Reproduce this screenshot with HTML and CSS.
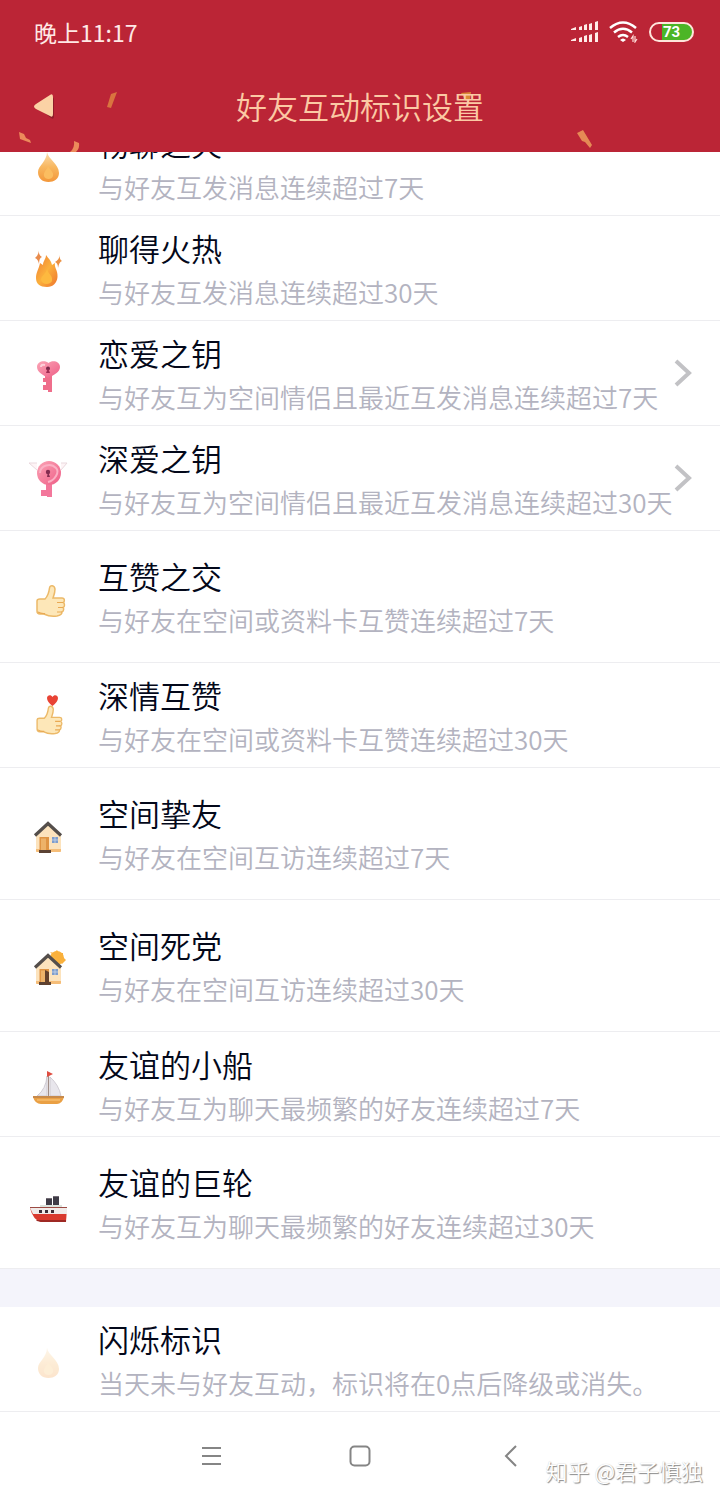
FILE: index.html
```html
<!DOCTYPE html>
<html lang="zh-CN">
<head>
    <meta charset="UTF-8">
    <meta name="viewport" content="width=device-width, initial-scale=1.0">
    <title>好友互动标识设置</title>
    <link rel="stylesheet" href="styles.css">
</head>
<body>

    <!-- shared icon shapes -->
    <svg class="defs" width="0" height="0" aria-hidden="true">
        <defs>
            <linearGradient id="fire" x1="0" y1="0" x2="0" y2="1">
                <stop offset="0" stop-color="#fbdcae"/>
                <stop offset=".5" stop-color="#f8b75f"/>
                <stop offset="1" stop-color="#f3973a"/>
            </linearGradient>
            <linearGradient id="hot" x1="0" y1="0" x2="1" y2="1">
                <stop offset="0" stop-color="#ee7a35"/>
                <stop offset=".5" stop-color="#fbb03c"/>
                <stop offset="1" stop-color="#ee742d"/>
            </linearGradient>
            <linearGradient id="pink" x1="0" y1="0" x2="1" y2="1">
                <stop offset="0" stop-color="#fba5b6"/>
                <stop offset="1" stop-color="#ee5d86"/>
            </linearGradient>
            <symbol id="drop" viewBox="0 0 40 40">
                <path d="M19 4C20 11 31 16 31 25C31 31 26 34 20.500 34C14 34 10 30 10 24C10 18 19 13 19 4Z" fill="url(#fire)"/>
                <path d="M20 18C22 22 26 24 25 28C24 32 17 32 16 28C15 24 19 22 20 18Z" fill="#fbbd60"/>
            </symbol>
            <symbol id="thumb" viewBox="0 0 40 40">
                <path d="M9 20Q9 18 12 18H17C20 15 21 11 21.500 7C22 3.500 26.500 4 27 8C27 12 26 14 25 17H34C37 17 37 21 35 21.500C37 22 37 26 35 26.500C36 27 36 30 34 31C34 34 32 34.500 29 35C21 36 18 34 16 33H12Q9 33 9 30Z" fill="#fde7b8" stroke="#ecb968" stroke-width="1.500"/>
                <path d="M29 21.500H35M30 26.500H35M29 31H34M10 31Q13 33 17 32.500" fill="none" stroke="#e9a953" stroke-width="1.200"/>
            </symbol>
            <symbol id="house" viewBox="0 0 40 40">
                <path d="M8 17L20 6L33 17V33Q33 34 32 34H9Q8 34 8 33Z" fill="#fce3bd"/>
                <path d="M8 31V33Q8 34 9 34H32Q33 34 33 33V31Z" fill="#f5bd78"/>
                <path d="M7 17.500L20 5.500L33 17.500" fill="none" stroke="#544e4b" stroke-width="3.200"/>
                <rect x="11.500" y="19" width="9.500" height="14" fill="#df9444"/>
                <rect x="13" y="20.500" width="5" height="12.500" fill="#edb269"/>
                <rect x="11" y="32" width="12" height="3" fill="#5b4234"/>
                <rect x="24" y="19" width="6" height="6" fill="#7f9dcc"/>
                <path d="M27 19V25M24 22H30" stroke="#c8d5ea" stroke-width=".800"/>
            </symbol>
        </defs>
    </svg>

    <header class="header">
        <svg class="confetti" width="620" height="152" viewBox="0 0 620 152" aria-hidden="true">
            <path d="M111 94L117 92L111 108L107 107Z" fill="#d9743f"/>
            <path d="M19 132L24 134L26 138L30 140L31 143L20 139Z" fill="#ec8a5b"/>
            <path d="M74 141L79 143Q80 148 76 152H70Q75 148 74 141Z" fill="#ec8a5b"/>
            <path d="M461 93L471 92L470 99L466 101Z" fill="#d98a36"/>
            <path d="M577 133L583 130L592 145L590 148L585 142L582 141Z" fill="#e58a55"/>
        </svg>
        <div class="status">
            <span class="time">晚上11:17</span>
            <div class="status-icons">
                <svg width="28" height="22" viewBox="0 0 28 22" aria-hidden="true">
                    <path d="M0 8L5 6V9H0ZM8 6L11 5V9H8ZM13 4L16 3V9H13ZM18 3L21 2V9H18ZM24 1L27 0V9H24Z" fill="#ffece8"/>
                    <path d="M0 19L5 17V20H0ZM8 17L11 16V21H8ZM13 15L16 14V21H13ZM18 14L21 13V21H18ZM24 12L27 11V21H24Z" fill="#ffece8"/>
                </svg>
                <svg width="30" height="22" viewBox="0 0 30 22" aria-hidden="true">
                    <path d="M1 7Q14 -4 27 7M5 11.500Q14 4 23 11.500M9 16Q14 12 19 16" fill="none" stroke="#fff" stroke-width="2.500"/>
                    <path d="M11 19Q14 16 17 19L14 21Z" fill="#fff"/>
                    <path d="M24 21V15L22 18M26 15V21L28 18" fill="none" stroke="#ffdcd8" stroke-width="1.200"/>
                </svg>
                <span class="battery">73</span>
            </div>
        </div>
        <div class="title-bar">
            <button class="back" type="button" aria-label="返回">
                <svg width="24" height="28" viewBox="0 0 24 28">
                    <path d="M5 17L18 7Q21 5 21 9V25Q21 29 18 27Z" fill="#8e1c29"/>
                    <path d="M3 13L17 4Q20 2 20 6V23Q20 27 17 25L3 18Q-1 15.500 3 13Z" fill="#fbd2a5"/>
                </svg>
            </button>
            <h1>好友互动标识设置</h1>
        </div>
    </header>

    <main class="list">
        <div class="row">
            <svg class="icon" viewBox="0 0 40 40"><use href="#drop"/></svg>
            <div class="text">
                <h2>畅聊之火</h2>
                <p>与好友互发消息连续超过7天</p>
            </div>
        </div>
        <div class="row">
            <svg class="icon" viewBox="0 0 40 40">
                <path d="M18 2C20 5 23 7 24 12L27 10C26 15 30 17 29.500 24C29 30 25 34 19 34C12 34 8 31 8 25C8 19 11 16 12 10L15 12C15 8 18 6 18 2Z" fill="url(#hot)"/>
                <path d="M19 16C20 21 25 22 24 28C22 32 14 32 13 27C13 23 18 21 19 16Z" fill="#fdb93f"/>
                <path d="M11 -4Q10 2 14 4Q11 5 11 11Q10 6 7 5Q11 2 11 -4Z" fill="#e98b4b"/>
                <path d="M32 2Q31 6 34 8Q31 9 30 15Q30 10 27 9Q31 7 32 2Z" fill="#eb9143"/>
            </svg>
            <div class="text">
                <h2>聊得火热</h2>
                <p>与好友互发消息连续超过30天</p>
            </div>
        </div>
        <a class="row" href="#">
            <svg class="icon" viewBox="0 0 40 40">
                <path d="M17 16H24V34H20V32H15V27H18V24H15V20H17Z" fill="#ef6e8b"/>
                <path d="M20 20C15 17 9 14 9 9C9 3 17 2 20.500 5C24 2 32 3 32 9C32 14 26 17 20 20Z" fill="url(#pink)"/>
                <path d="M13 9Q13 6 17 7" fill="none" stroke="#fdd0d9" stroke-width="2"/>
                <circle cx="20" cy="10.500" r="2" fill="#742747"/>
                <path d="M20 10L22 15H18Z" fill="#a02c52"/>
            </svg>
            <div class="text">
                <h2>恋爱之钥</h2>
                <p>与好友互为空间情侣且最近互发消息连续超过7天</p>
            </div>
            <svg class="chevron" width="18" height="28" viewBox="0 0 18 28"><path d="M2 2L15 14L2 26"/></svg>
        </a>
        <a class="row" href="#">
            <svg class="icon" viewBox="0 0 40 40">
                <path d="M9 0H1L9 7M33 0H39L33 7" fill="#fef4f6" stroke="#ead9de"/>
                <path d="M18 19H24V34H19V33H13V27H18Z" fill="#f3779b"/>
                <circle cx="21" cy="10" r="12" fill="url(#pink)"/>
                <path d="M12 10A9 8 0 0 1 28 5Q31 8 28 13Q25 18 20 19" fill="none" stroke="#fbb0c4" stroke-width="2"/>
                <circle cx="20" cy="9" r="2.200" fill="#842c50"/>
                <path d="M20 9L22 14H19Z" fill="#842c50"/>
            </svg>
            <div class="text">
                <h2>深爱之钥</h2>
                <p>与好友互为空间情侣且最近互发消息连续超过30天</p>
            </div>
            <svg class="chevron" width="18" height="28" viewBox="0 0 18 28"><path d="M2 2L15 14L2 26"/></svg>
        </a>
        <div class="row tall">
            <svg class="icon" viewBox="0 0 40 40"><use href="#thumb"/></svg>
            <div class="text">
                <h2>互赞之交</h2>
                <p>与好友在空间或资料卡互赞连续超过7天</p>
            </div>
        </div>
        <div class="row">
            <svg class="icon" viewBox="0 0 40 40">
                <use href="#thumb" x="0" y="2" width="38" height="36"/>
                <path d="M24.500 6C21 3 19 1 19 -2C19 -5 23 -6 24.500 -3C26 -6 30 -5 30 -2C30 1 28 3 24.500 6Z" fill="#e84335"/>
            </svg>
            <div class="text">
                <h2>深情互赞</h2>
                <p>与好友在空间或资料卡互赞连续超过30天</p>
            </div>
        </div>
        <div class="row tall">
            <svg class="icon" viewBox="0 0 40 40"><use href="#house"/></svg>
            <div class="text">
                <h2>空间挚友</h2>
                <p>与好友在空间互访连续超过7天</p>
            </div>
        </div>
        <div class="row tall">
            <svg class="icon" viewBox="0 0 40 40">
                <circle cx="29" cy="8" r="7" fill="#fbb33c"/>
                <path d="M22 2L26 3L29 0L31 3L35 3L35 7L38 10L34 14Z" fill="#f9b03b"/>
                <use href="#house"/>
                <path d="M17 20L21 22V35H17Z" fill="#63402b"/>
            </svg>
            <div class="text">
                <h2>空间死党</h2>
                <p>与好友在空间互访连续超过30天</p>
            </div>
        </div>
        <div class="row">
            <svg class="icon" viewBox="0 0 40 40">
                <path d="M19 7Q18 20 9 27H19ZM22 8Q31 16 33 27H22Z" fill="#e8e6ec" stroke="#c8c3cb" stroke-width=".800"/>
                <path d="M20.500 3V29" stroke="#a08d87" stroke-width="1.200"/>
                <path d="M19 2L25 5L19 8Z" fill="#df4e42"/>
                <path d="M5 28H36Q34 35 29 35H13Q7 35 5 28Z" fill="#eaa044"/>
                <path d="M5 27H36V29H5Z" fill="#c88a4a"/>
                <path d="M9 31H32" stroke="#f6bc6b" stroke-width="1.500"/>
            </svg>
            <div class="text">
                <h2>友谊的小船</h2>
                <p>与好友互为聊天最频繁的好友连续超过7天</p>
            </div>
        </div>
        <div class="row tall">
            <svg class="icon" viewBox="0 0 40 40">
                <path d="M12 18H34V21H12Z" fill="#dce3dd"/>
                <path d="M18 12H24V18H18ZM25 10H31V18H25Z" fill="#3e3b46"/>
                <path d="M18 11H24V12H18ZM25 9H31V10H25Z" fill="#746d76"/>
                <path d="M2 21H39L38 35H13Q5 33 2 21Z" fill="#d93a2e"/>
                <path d="M2 21H39V27H5Z" fill="#f1ebe9"/>
                <path d="M2 20.500H39" stroke="#9b4a43" stroke-width="1.200"/>
                <path d="M9 34L13 35H38V33H8Z" fill="#9e2924"/>
                <path d="M11 23H14V26H11ZM17 23H20V26H17ZM23 23H26V26H23Z" fill="#3d2f38"/>
            </svg>
            <div class="text">
                <h2>友谊的巨轮</h2>
                <p>与好友互为聊天最频繁的好友连续超过30天</p>
            </div>
        </div>
        <div class="row section">
            <svg class="icon faded" viewBox="0 0 40 40"><use href="#drop"/></svg>
            <div class="text">
                <h2>闪烁标识</h2>
                <p>当天未与好友互动，标识将在0点后降级或消失。</p>
            </div>
        </div>
    </main>

    <nav class="nav">
        <button type="button" aria-label="菜单">
            <svg width="24" height="24" viewBox="0 0 24 24"><path d="M3 4H22M3 12H22M3 20H22"/></svg>
        </button>
        <button type="button" aria-label="主页">
            <svg width="24" height="24" viewBox="0 0 24 24"><rect x="2.500" y="2.500" width="19" height="19" rx="4"/></svg>
        </button>
        <button type="button" aria-label="后退">
            <svg width="24" height="24" viewBox="0 0 24 24"><path d="M19 2L9 12L19 22"/></svg>
        </button>
        <span class="watermark">知乎 @君子慎独</span>
    </nav>

</body>
</html>
```
FILE: styles.css
```css
* {
    box-sizing: border-box;
}
body {
    margin: 0;
    background-color: #f4f4fb;
    font-family: "Noto Sans CJK SC", sans-serif;
    font-weight: 350;
    color: #03081a;
}
h1, h2, p {
    margin: 0;
    font-weight: 350;
}
button {
    border: none;
    padding: 0;
    background: none;
    cursor: pointer;
}
svg {
    display: block;
    flex: none;
}
.defs {
    position: absolute;
}

/* header */
.header {
    position: relative;
    z-index: 1;
    height: 152px;
    background-color: #bb2536;
}
.confetti {
    position: absolute;
    top: 0;
    left: 0;
}
.status {
    display: flex;
    justify-content: space-between;
    align-items: center;
    height: 64px;
    padding: 0 26px 0 34px;
}
.time {
    font-size: 23px;
    font-weight: 400;
    color: #ffe9e6;
}
.status-icons {
    display: flex;
    align-items: center;
    gap: 10px;
}
.battery {
    width: 45px;
    height: 20px;
    border: 2px solid #ffe6dc;
    border-radius: 10px;
    background: linear-gradient(to right, #bb2536 27%, #4cb526 27%);
    color: #fff;
    font-family: Roboto, sans-serif;
    font-size: 15px;
    font-weight: 700;
    line-height: 17px;
    text-align: center;
}
.title-bar {
    position: relative;
    display: flex;
    justify-content: center;
    align-items: center;
    height: 84px;
    padding-bottom: 2px;
}
.title-bar h1 {
    font-size: 31px;
    color: #fbc9a4;
}
.back {
    position: absolute;
    left: 33px;
}

/* list, scrolled partly under the header */
.list {
    margin-top: -41px;
}
.row {
    display: flex;
    align-items: center;
    padding: 10px 28px 6px;
    border-bottom: 1px solid #ededf0;
    background-color: #fff;
    color: inherit;
    text-decoration: none;
}
.row.tall {
    padding-top: 23px;
    padding-bottom: 20px;
}
.row.section {
    margin-top: 38px;
}
.icon {
    width: 40px;
    height: 40px;
    margin-top: 5px;
    overflow: visible;
}
.icon.faded {
    opacity: 0.25;
}
.text {
    flex: 1;
    margin-left: 30px;
    white-space: nowrap;
}
.text h2 {
    font-size: 31px;
    line-height: 44px;
}
.text p {
    font-size: 26px;
    line-height: 44px;
    color: #b3b3c0;
}
.chevron {
    margin-bottom: 4px;
    fill: none;
    stroke: #c2c2c5;
    stroke-width: 4;
}

/* bottom navigation */
.nav {
    position: relative;
    display: flex;
    justify-content: center;
    align-items: center;
    gap: 125px;
    height: 88px;
    background-color: #fff;
}
.nav svg {
    fill: none;
    stroke: #858585;
    stroke-width: 2;
}
.watermark {
    position: absolute;
    right: 17px;
    bottom: 13px;
    font-size: 22px;
    line-height: 34px;
    color: #fff;
    text-shadow: 1px 1px 1px #888, 0 0 1px #ccc;
}
```
